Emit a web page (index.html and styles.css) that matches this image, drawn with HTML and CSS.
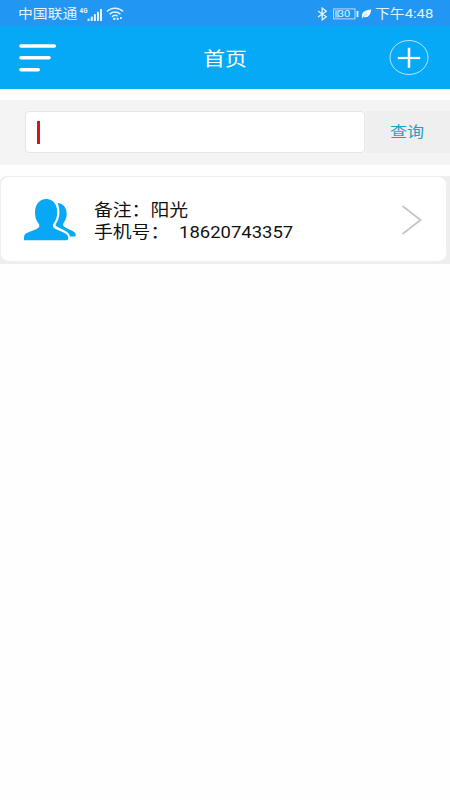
FILE: index.html
```html
<!DOCTYPE html>
<html lang="zh-CN">
<head>
<meta charset="utf-8">
<meta name="viewport" content="width=device-width, initial-scale=1">
<title>首页</title>
<link rel="stylesheet" href="styles.css">
</head>
<body>

<div class="status-bar">
  <div class="status-left">
    <span class="carrier wide">中国联通</span>
    <svg class="signal" width="24" height="16" viewBox="0 0 24 16" fill="#e3f3ff">
      <text class="net" x=".5" y="7" textLength="8" lengthAdjust="spacingAndGlyphs">4G</text>
      <rect x="8.6" y="12.6" width="2" height="2.4"/>
      <rect x="11.8" y="10.6" width="2" height="4.4"/>
      <rect x="14.9" y="8.2" width="2" height="6.8"/>
      <rect x="18" y="5.8" width="2" height="9.2"/>
      <rect x="21" y="3" width="2" height="12"/>
    </svg>
    <svg class="wifi" width="18" height="14" viewBox="0 0 18 14" fill="none" stroke="#e3f3ff" stroke-width="1.5">
      <path d="M1 4.6C5.4.1 12.6.1 17 4.6M3.6 7.2C6.6 4.2 11.4 4.2 14.4 7.2M6 9.8C7.7 8.1 10 8 11.6 9"/>
      <path d="M7.2 11.8h2.2M10.8 11.8h1.8M14 11h1.8" stroke-width="2.2"/>
    </svg>
  </div>
  <div class="status-right">
    <svg width="11" height="14" viewBox="0 0 11 14" fill="none" stroke="#e3f3ff" stroke-width="1.3">
      <path d="M1 4L9.3 9.7L5.2 12.9V1.1L9.3 4.2L1 10"/>
    </svg>
    <svg class="battery" width="26" height="12" viewBox="0 0 26 12">
      <rect x=".6" y=".9" width="21.4" height="10" fill="none" stroke="#b9ddfb"/>
      <rect x="2" y="2.2" width="4" height="7.4" fill="#8cc8fa"/>
      <rect x="23.6" y="3" width="1.8" height="6" fill="#e3f3ff"/>
      <text class="level" x="4.8" y="9.3" textLength="12.5" lengthAdjust="spacingAndGlyphs">30</text>
    </svg>
    <svg class="leaf" width="11" height="10" viewBox="0 0 11 10">
      <path d="M1 8.8C.1 3.8 3.4.9 10.2.6C9.6 6 7.2 9.3 2.6 8L.8 9.6z" fill="#f2faff"/>
      <path d="M2 8.2L6 4.6" stroke="#2196f3" stroke-width=".4"/>
    </svg>
    <span class="clock wide">下午4:48</span>
  </div>
</div>

<header class="header">
  <svg class="menu" width="38" height="30" viewBox="0 0 38 30" stroke="#fff" stroke-width="3.6" stroke-linecap="round">
    <path d="M2 3H35.3M2 14.8H30M2 26.7H19.2"/>
  </svg>
  <h1 class="title">首页</h1>
  <svg class="add" width="40" height="36" viewBox="0 0 40 36" fill="none" stroke="#fff">
    <ellipse cx="20" cy="17.5" rx="19" ry="17" stroke-width=".7"/>
    <path d="M8.8 18H31.2" stroke-width="2.2"/>
    <path d="M20 7.8V27.8" stroke-width="2.5"/>
  </svg>
</header>

<div class="search">
  <div class="search-input"><span class="caret"></span></div>
  <div class="search-btn"><span>查询</span></div>
</div>

<div class="list">
  <div class="item">
    <svg class="people" width="54" height="44" viewBox="0 0 54 44" fill="#09a8f7">
      <path d="M1 42.3V39.4C1 36.7 2.5 35.6 5 34.6L13.6 31C16.6 29.6 17.2 27.4 15.4 25.2C13 22.4 12 18.8 12 14.4C12 6.6 16.4 1 23.2 1C30 1 34.2 6.4 34.2 14C34.2 18.6 33 22.2 30.8 25.2C29.2 27.4 29.6 29.4 32.6 30.9L40.6 34.6C43.6 36 45.2 37.4 45.2 39.6V40.6Q45.2 42.3 43.4 42.3z"/>
      <path d="M34.6 5.1C40 5.5 43.7 9.6 43.7 15.6C43.7 19.4 42.6 22.2 40.9 24.6C39.5 26.6 39.9 28.2 42.4 29.5L48.6 32.6C51.4 34 52.8 35.2 52.8 37.3Q52.8 38.6 51.4 38.6H46.9C46.4 35.8 45.2 34.4 42 32.7L34.2 28.8C32.2 27.8 32.2 26.8 33.4 25C35.6 21.8 36.5 18.4 36.4 13.7C36.3 10.5 35.7 7.8 34.6 5.1z"/>
    </svg>
    <div class="info">
      <div class="line"><span class="wide">备注：阳光</span></div>
      <div class="line"><span class="wide">手机号：</span><span class="phone wide">18620743357</span></div>
    </div>
    <svg class="arrow" width="22" height="32" viewBox="0 0 22 32" fill="none" stroke="#c8c8c8" stroke-width="2">
      <path d="M1.5 2L19.5 16L1.5 30"/>
    </svg>
  </div>
</div>

</body>
</html>
```
FILE: styles.css
```css
* {
  box-sizing: border-box;
}

body {
  margin: 0;
  background: #fefefe;
  font-family: Roboto, "Noto Sans CJK SC", sans-serif;
  color: #111;
}

svg {
  display: block;
  flex: none;
}

.wide {
  display: inline-block;
  transform: scaleX(1.14);
  transform-origin: left center;
  white-space: nowrap;
}

/* status bar */
.status-bar {
  display: flex;
  justify-content: space-between;
  height: 26px;
  padding: 1px 17px 0 18px;
  background: #2196f3;
  color: #e3f3ff;
  font-size: 13px;
  line-height: 26px;
}

.status-left,
.status-right {
  display: flex;
  align-items: center;
}

.carrier {
  width: 61px;
}

.wifi {
  margin-left: 3px;
}

.net {
  font-size: 7px;
  font-weight: bold;
}

.battery {
  margin-left: 5px;
}

.level {
  font-size: 9.5px;
  fill: #e3f3ff;
}

.leaf {
  margin: 0 3px 0 2px;
}

.clock {
  width: 58px;
}

/* header */
.header {
  display: flex;
  align-items: center;
  justify-content: space-between;
  height: 63px;
  padding: 0 21px 0 18px;
  background: #05a9f6;
}

.menu {
  margin-left: 1px;
}

.title {
  margin: 4px 0 0 5px;
  color: #fff;
  font-size: 19px;
  font-weight: normal;
  line-height: 30px;
  transform: scaleX(1.15);
}

/* search */
.search {
  display: flex;
  align-items: center;
  height: 65px;
  margin-top: 11px;
  padding: 0 0 1px 25px;
  background: #f4f4f4;
}

.search-input {
  display: flex;
  align-items: center;
  width: 340px;
  height: 42px;
  padding-left: 11px;
  background: #fff;
  border: 1px solid #e6e6e6;
  border-radius: 4px;
}

.caret {
  width: 3px;
  height: 23px;
  background: #d4151b;
}

.search-btn {
  flex: 1;
  height: 42px;
  margin-left: 1px;
  padding-right: 2px;
  background: #efefef;
  color: #1b9fd4;
  font-size: 15px;
  line-height: 43px;
  text-align: center;
}

.search-btn span {
  display: inline-block;
  transform: scaleX(1.14);
}

/* list */
.list {
  margin-top: 11px;
  padding: 1px 4px 3px 1px;
  background: #eee;
  border-top-left-radius: 6px;
}

.item {
  display: flex;
  align-items: center;
  height: 84px;
  padding: 2px 23px 0 22px;
  background: #fff;
  border-radius: 8px;
}

.info {
  flex: 1;
  margin: 3px 0 0 17px;
}

.line {
  display: flex;
  height: 22px;
  font-size: 16.5px;
  line-height: 22px;
}

.phone {
  margin-left: 19px;
  transform: scaleX(1.12);
}
```
